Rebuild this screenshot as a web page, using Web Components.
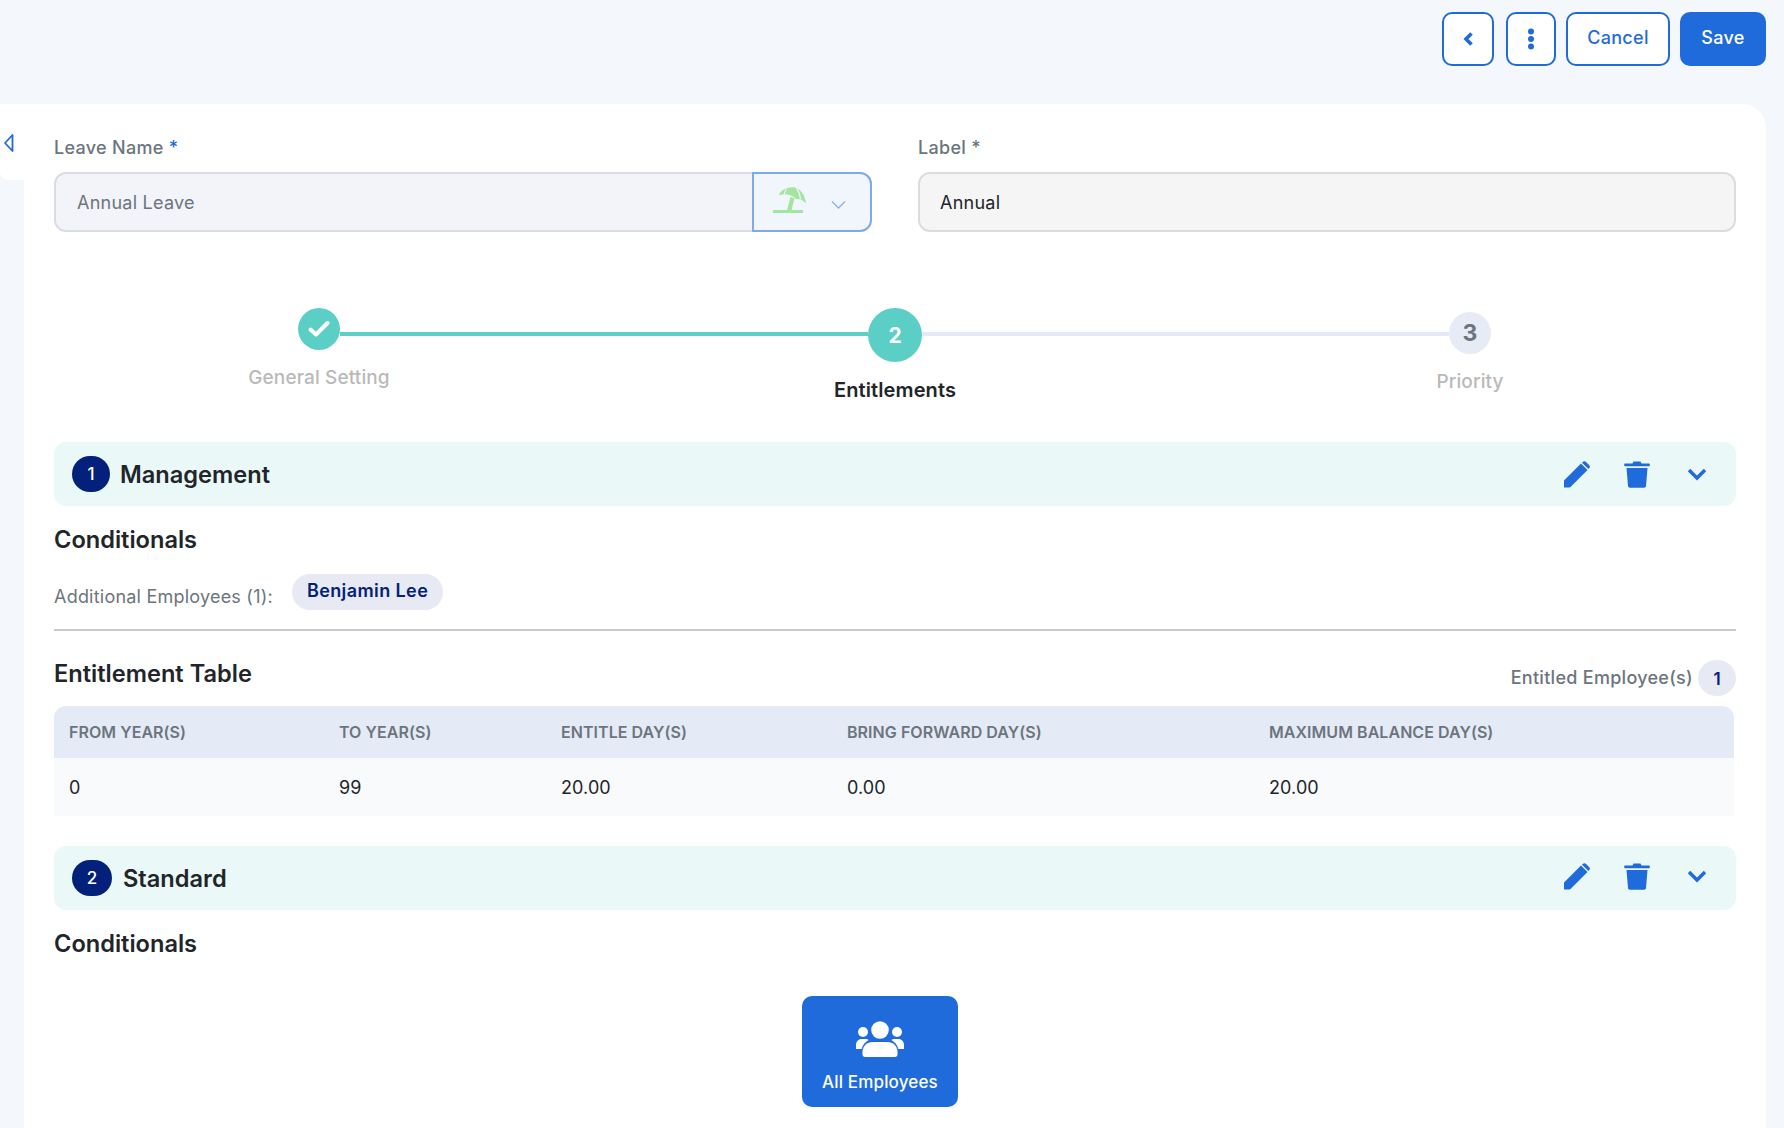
<!DOCTYPE html>
<html lang="en"><head><meta charset="utf-8"><title>Leave</title>
<style>
html,body{margin:0;padding:0;background:#f4f7fc;height:1128px;overflow:hidden}
body{font-family:"Inter","Noto Sans",sans-serif;color:#212529;-webkit-font-smoothing:antialiased}
</style></head><body>
<leave-page>
  <tool-bar slot="bar">
    <tool-button kind="icon" w="52"><svg width="12" height="16" viewBox="0 0 12 16"><path d="M9.500 2.500 4 8l5.500 5.500" fill="none" stroke="#1f6bdb" stroke-width="3.600"/></svg></tool-button>
    <tool-button kind="icon" w="50"><svg width="8" height="22" viewBox="0 0 8 22"><circle cx="4" cy="3.500" r="3" fill="#1f6bdb"/><circle cx="4" cy="11" r="3" fill="#1f6bdb"/><circle cx="4" cy="18.500" r="3" fill="#1f6bdb"/></svg></tool-button>
    <tool-button w="104">Cancel</tool-button>
    <tool-button kind="primary" w="86">Save</tool-button>
  </tool-bar>
  <form-card>
    <field-row>
      <text-field label="Leave Name" req value="Annual Leave" tone="a"><icon-select></icon-select></text-field>
      <text-field label="Label *" value="Annual" tone="b"></text-field>
    </field-row>
    <step-bar>
      <step-item state="done" size="42" top="0" label="General Setting"></step-item>
      <step-line on style="flex:0 0 528px"></step-line>
      <step-item state="active" size="54" top="0" label="Entitlements">2</step-item>
      <step-line style="flex:1"></step-line>
      <step-item state="todo" size="42" top="4" label="Priority">3</step-item>
    </step-bar>
    <group-section num="1" title="Management" style="margin-top:41px" bw="38" gap="10" lift="0">
      <sub-title>Conditionals</sub-title>
      <employee-row>Benjamin Lee</employee-row>
      <rule-line></rule-line>
      <table-head count="1"></table-head>
      <entitle-table></entitle-table>
    </group-section>
    <group-section num="2" title="Standard" style="margin-top:30px" bw="40" gap="11" lift="2">
      <sub-title>Conditionals</sub-title>
      <all-tile>All Employees</all-tile>
    </group-section>
  </form-card>
</leave-page>
<script>
function def(name, html){
  customElements.define(name, class extends HTMLElement{
    constructor(){super();this.attachShadow({mode:'open'});}
    connectedCallback(){
      const a=n=>this.getAttribute(n);
      const has=n=>this.hasAttribute(n);
      this.shadowRoot.innerHTML = typeof html==='function'?html(a,has):html;
    }
  });
}
const BLUE='#1f6bdb';
def('leave-page',`<style>:host{display:block;height:1128px;overflow:hidden}</style><slot name="bar"></slot><slot></slot>`);
def('tool-bar',`<style>:host{display:flex;justify-content:flex-end;gap:10px;height:104px;padding:12px 18px 0 0;box-sizing:border-box}
::slotted(tool-button:first-child){margin-right:2px}</style><slot></slot>`);
def('tool-button',(a)=>{
  const p=a('kind')==='primary';
  return `<style>:host{display:flex;align-items:center;justify-content:center;box-sizing:border-box;width:${a('w')}px;height:54px;border-radius:10px;
  border:2px solid ${BLUE};background:${p?BLUE:'#fff'};color:${p?'#fff':BLUE};font-size:18px;font-weight:500;letter-spacing:.3px;padding-bottom:${a('kind')==='icon'?0:3}px}</style><slot></slot>`});
def('form-card',`<style>:host{display:block;position:relative;box-sizing:border-box;margin:0 18px 0 24px;height:1024px;background:#fff;border-radius:24px 24px 0 0;padding:31px 30px 0}
.tab{position:absolute;left:-24px;top:0;width:48px;height:76px;background:#fff;border-radius:0 0 0 8px;}
.tab svg{position:absolute;left:3px;top:29px}
.body{position:relative}</style>
<div class="tab"><svg width="11" height="20" viewBox="0 0 11 20"><path d="M9.500 2v16L2 10z" fill="none" stroke="${BLUE}" stroke-width="1.800" stroke-linejoin="round"/></svg></div>
<div class="body"><slot></slot></div>`);
def('field-row',`<style>:host{display:grid;grid-template-columns:818px 818px;gap:46px}</style><slot></slot>`);
def('text-field',(a,has)=>{
  const t=a('tone')==='a';
  return `<style>:host{display:block}
  .l{height:24px;line-height:26px;font-size:18px;font-weight:500;letter-spacing:.3px;color:#6c757d;margin-bottom:13px}
  .l b{color:${BLUE};font-weight:500}
  .b{display:flex;box-sizing:border-box;height:60px;border:2px solid #d9dde2;border-radius:12px;background:${t?'#f2f4f9':'#f5f5f5'};position:relative}
  .v{flex:1;padding-left:${t?21:20}px;line-height:58px;font-size:18px;letter-spacing:.25px;color:${t?'#6c757d':'#212529'}}
  ::slotted(*){margin:-2px -2px -2px 0}</style>
  <div class="l">${a('label')}${has('req')?' <b>*</b>':''}</div>
  <div class="b"><div class="v">${a('value')}</div><slot></slot></div>`});
def('icon-select',`<style>:host{display:flex;box-sizing:border-box;width:120px;height:60px;border:2px solid #7faae8;border-radius:0 12px 12px 0;background:#f1f5fc;padding:12px 0 0 18px}
.c{margin:14px 0 0 23px}</style>
<svg width="36" height="28" viewBox="0 0 36 28"><path d="M6.700 9C9 4 15 1.200 21 1.300c7 .2 12 7.700 13 16-3-3.300-7-4.800-10-4.300C21 9 13 7 6.700 9z" fill="#a3e4a0"/><path d="M18.500 11 15 24.500h4.500L22.500 12z" fill="#a3e4a0"/><path d="M14.500 3C13 5 12.500 6.500 12.500 8M24.500 2.500c2.500 3 3.500 7 4 11" fill="none" stroke="#f1f5fc" stroke-width="1.200"/><rect x="1" y="24" width="30" height="3" fill="#a3e4a0"/></svg>
<svg class="c" width="15" height="10" viewBox="0 0 15 10"><path d="M1 1.500l6.500 6.500L14 1.500" fill="none" stroke="#8ab2ec" stroke-width="1.300"/></svg>`);
def('step-bar',`<style>:host{display:flex;align-items:flex-start;margin-top:76px;padding:0 245px 0 244px;height:93px}</style><slot></slot>`);
def('step-line',(a,has)=>`<style>:host{display:block;height:4px;margin-top:24px;background:${has('on')?'#5bcfc5':'#e6e9f5'}}</style>`);
def('step-item',(a)=>{
  const s=a('state'),z=a('size');
  const bg=s==='todo'?'#e6ebf6':'#5bcfc5',fg=s==='todo'?'#6c757d':'#fff';
  const lc=s==='active'?'#212529':'#b9b9b9',lw=s==='active'?600:500,ls=s==='active'?20:19;
  return `<style>:host{display:flex;flex-direction:column;align-items:center;width:${z}px;margin-top:${a('top')}px;position:relative;z-index:1}
  .c{width:${z}px;height:${z}px;border-radius:50%;background:${bg};color:${fg};display:flex;align-items:center;justify-content:center;font-size:${s==='todo'?23:21}px;font-weight:700;flex:none}
  .t{margin-top:18px;white-space:nowrap;line-height:20px;font-size:${ls}px;font-weight:${lw};letter-spacing:.12px;color:${lc}}</style>
  <div class="c">${s==='done'?`<svg width="22" height="18" viewBox="0 0 22 18"><path d="M2.500 9.500 8 14.500 19.500 3" fill="none" stroke="#fff" stroke-width="4" stroke-linecap="round" stroke-linejoin="round"/></svg>`:'<slot></slot>'}</div>
  <div class="t">${a('label')}</div>`});
def('group-section',(a)=>`<style>:host{display:block}
 .h{display:flex;align-items:center;height:64px;background:#ebf8f8;border-radius:12px;padding:0 0 0 18px;color:#212529}
 .n{width:${a('bw')}px;height:36px;border-radius:18px;background:#03217a;color:#fff;display:flex;align-items:center;justify-content:center;font-size:17px;font-weight:500;margin-right:${a('gap')}px}
 .t{font-size:23.600px;font-weight:600;flex:1}
 svg{display:block}
 .i{display:flex;align-items:center;margin-bottom:${+a('lift')*2}px}
 </style>
 <div class="h"><div class="n">${a('num')}</div><div class="t">${a('title')}</div>
 <div class="i">
 <svg width="28" height="28" viewBox="0 0 28 28"><path d="M1 27.500V20.500L18 3.500l6.500 6.500L7.500 27c-.3.3-.6.500-1 .5z" fill="${BLUE}"/><path d="M20 1.800c.8-.8 2-.8 2.800 0l3.500 3.500c.8.8.8 2 0 2.800L25.500 9 19 2.800z" fill="${BLUE}"/></svg>
 <svg style="margin-left:33px" width="26" height="28" viewBox="0 0 26 28"><path d="M9.500 1.500h7l1 2H25c.5 0 .8.400.8.800V5.500c0 .4-.3.700-.8.700H1c-.5 0-.8-.3-.8-.7V4.300c0-.4.3-.8.800-.8h7.500zM2.500 8h21l-1.500 18c-.1 1-.9 1.700-1.900 1.700H5.900c-1 0-1.800-.7-1.900-1.700z" fill="${BLUE}"/></svg>
 <svg style="margin:0 29px 0 37px" width="20" height="14" viewBox="0 0 20 14"><path d="M2 3l8 8 8-8" fill="none" stroke="${BLUE}" stroke-width="3.400"/></svg>
 </div></div>
 <slot></slot>`);
def('sub-title',`<style>:host{display:block;height:30px;line-height:30px;margin-top:19px;font-size:23.600px;font-weight:600;color:#212529}</style><slot></slot>`);
def('employee-row',`<style>:host{display:flex;align-items:flex-start;margin-top:19px;height:36px}
 .l{font-size:18px;letter-spacing:.22px;color:#6c757d;line-height:24px;margin:11px 19px 0 0}
 .c{height:36px;line-height:33px;padding:0 15px;border-radius:18px;background:#e7e9f3;color:#03217a;font-size:18px;font-weight:600;letter-spacing:.4px}</style>
 <div class="l">Additional Employees (1):</div><div class="c"><slot></slot></div>`);
def('rule-line',`<style>:host{display:block;height:2px;margin-top:19px;background:#c9c9c9}</style>`);
def('table-head',(a)=>`<style>:host{display:flex;align-items:flex-start;margin-top:29px;height:36px}
 .t{flex:1;font-size:23.600px;font-weight:600;line-height:30px;margin-top:-1px;color:#212529}
 .l{font-size:18px;font-weight:500;letter-spacing:.28px;color:#6c757d;line-height:36px;margin-right:5px}
 .n{width:38px;height:36px;border-radius:50%;background:#e7e9f3;color:#03217a;font-weight:600;font-size:17px;text-align:center;line-height:38px}</style>
 <div class="t">Entitlement Table</div><div class="l">Entitled Employee(s)</div><div class="n">${a('count')}</div>`);
def('entitle-table',`<style>:host{display:block;margin:10px 2px 0 0}
 .g{display:grid;grid-template-columns:270px 222px 286px 422px 1fr;padding-left:15px;align-items:center}
 .hd{height:52px;background:#e5ebf6;border-radius:12px 12px 0 0;font-size:16px;font-weight:600;letter-spacing:.05px;color:#6c757d}
 .rw{height:58px;background:#f8fafc;font-size:18px;letter-spacing:.1px;color:#212529}</style>
 <div class="g hd"><div>FROM YEAR(S)</div><div>TO YEAR(S)</div><div>ENTITLE DAY(S)</div><div>BRING FORWARD DAY(S)</div><div>MAXIMUM BALANCE DAY(S)</div></div>
 <div class="g rw"><div>0</div><div>99</div><div>20.00</div><div>0.00</div><div>20.00</div></div>`);
def('all-tile',`<style>:host{display:flex;flex-direction:column;align-items:center;box-sizing:border-box;width:156px;height:111px;margin:37px 0 0 748px;background:${BLUE};border-radius:10px;color:#fff;padding-top:25px;font-size:17px;font-weight:500;letter-spacing:.15px}
 .t{margin-top:14px;line-height:22px}</style>
 <svg width="50" height="36" viewBox="0 0 50 36" fill="#fff"><circle cx="25" cy="9" r="8.800"/><circle cx="8" cy="11" r="5"/><circle cx="42" cy="11" r="5"/>
 <path d="M10 36c-1.500 0-2.500-1-2.500-2.500V31c0-6 4.500-10 10-10h15c5.500 0 10 4 10 10v2.500c0 1.500-1 2.500-2.500 2.500z"/>
 <path d="M1 28v-4c0-3.500 2.500-6 5.500-6h4.500c1 0 2 .3 2.700 1-3.500 2-6.200 5-7 9zM49 28v-4c0-3.500-2.500-6-5.500-6H39c-1 0-2 .3-2.700 1 3.500 2 6.200 5 7 9z"/></svg>
 <div class="t"><slot></slot></div>`);
</script>
</body></html>
